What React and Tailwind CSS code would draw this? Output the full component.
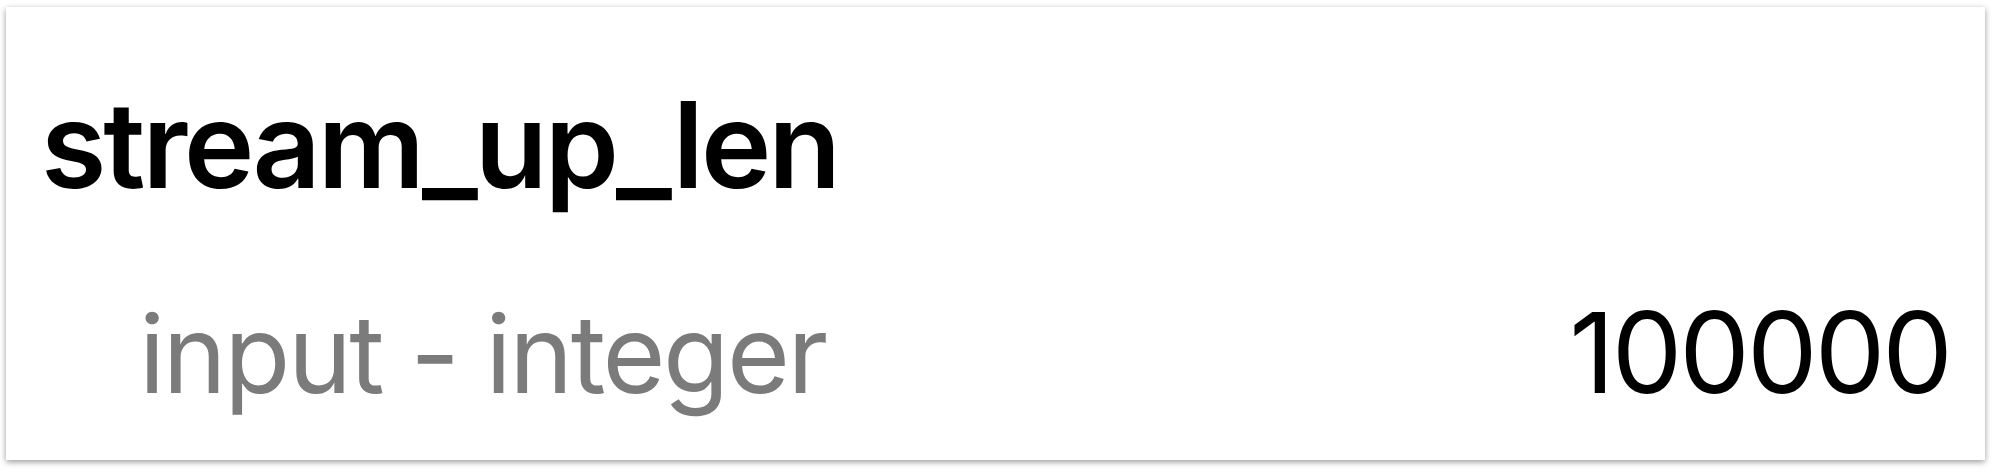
import React from "react";

const App = () => {
  return (
    <div className="w-[1996px] h-[474px] bg-white pl-[6px] pt-[7px] font-['Inter','Liberation_Sans',Arial,sans-serif]">
      <div className="w-[1979px] h-[453px] bg-white shadow-[0_2px_6px_rgba(0,0,0,0.4)] flex flex-col pt-[79px]">
        {/* Title */}
        <h1 className="pl-[35px] text-[119px] leading-none font-semibold text-black tracking-[-3px]">
          stream_up_len
        </h1>

        {/* Type + value row */}
        <div className="mt-[91px] flex items-baseline justify-between pl-[133px] pr-[35px]">
          <span className="text-[108px] leading-none font-normal text-[#7b7b7b] tracking-[-2.4px]">
            input - integer
          </span>
          <span className="text-[112px] leading-none font-normal text-black tracking-[-3px]">
            100000
          </span>
        </div>
      </div>
    </div>
  );
};

export default App;
